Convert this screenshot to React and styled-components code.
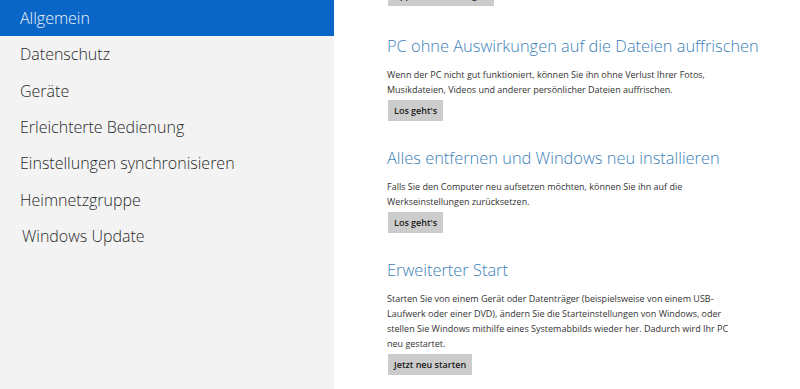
import React from "react";
import styled, { createGlobalStyle } from "styled-components";

const Global = createGlobalStyle`
  html, body { margin: 0; padding: 0; background: #ffffff; overflow: hidden; }
  body { font-family: "Open Sans", "Noto Sans", sans-serif; }
`;

const Page = styled.div`
  display: flex;
  width: 800px;
  height: 389px;
  overflow: hidden;
  background: #ffffff;
`;

const Sidebar = styled.nav`
  width: 334px;
  flex-shrink: 0;
  background: #f3f3f3;
  display: flex;
  flex-direction: column;
`;

const NavItem = styled.div`
  height: 36.3px;
  display: flex;
  align-items: center;
  padding-left: ${(p) => (p.$indent ? 22 : 20)}px;
  font-family: "Open Sans", sans-serif;
  font-weight: 300;
  font-size: 16px;
  color: ${(p) => (p.$active ? "#eef4fb" : "#2a2a2a")};
  background: ${(p) => (p.$active ? "#0a66c6" : "transparent")};
  white-space: nowrap;
`;

const Content = styled.main`
  flex: 1;
  padding-left: 53px;
  display: flex;
  flex-direction: column;
  margin-top: -15px;
`;

const Section = styled.section`
  display: flex;
  flex-direction: column;
  align-items: flex-start;
  padding-top: ${(p) => p.$top || 0}px;
`;

const Heading = styled.h2`
  margin: 0;
  font-family: "Open Sans", sans-serif;
  font-weight: 300;
  font-size: 16.4px;
  line-height: 22px;
  color: #3a7fba;
  white-space: nowrap;
`;

const Body = styled.p`
  margin: 10px 0 3px;
  max-width: 345px;
  font-family: "Open Sans", sans-serif;
  font-size: 9px;
  line-height: 15px;
  color: #333333;
`;

const Button = styled.button`
  border: none;
  margin: 0 0 0 1px;
  height: 21px;
  padding: 0 6px;
  background: #cccccc;
  font-family: "Open Sans", sans-serif;
  font-weight: 600;
  font-size: 9px;
  color: #1a1a1a;
  cursor: pointer;
`;

const navItems = [
  "Allgemein",
  "Datenschutz",
  "Geräte",
  "Erleichterte Bedienung",
  "Einstellungen synchronisieren",
  "Heimnetzgruppe",
  "Windows Update",
];

const sections = [
  {
    title: "PC ohne Auswirkungen auf die Dateien auffrischen",
    text: "Wenn der PC nicht gut funktioniert, können Sie ihn ohne Verlust Ihrer Fotos, Musikdateien, Videos und anderer persönlicher Dateien auffrischen.",
    button: "Los geht's",
  },
  {
    title: "Alles entfernen und Windows neu installieren",
    text: "Falls Sie den Computer neu aufsetzen möchten, können Sie ihn auf die Werkseinstellungen zurücksetzen.",
    button: "Los geht's",
  },
  {
    title: "Erweiterter Start",
    text: "Starten Sie von einem Gerät oder Datenträger (beispielsweise von einem USB-Laufwerk oder einer DVD), ändern Sie die Starteinstellungen von Windows, oder stellen Sie Windows mithilfe eines Systemabbilds wieder her. Dadurch wird Ihr PC neu gestartet.",
    button: "Jetzt neu starten",
  },
];

export default function App() {
  return (
    <Page>
      <Global />
      <Sidebar>
        {navItems.map((n, i) => (
          <NavItem key={n} $active={i === 0} $indent={n === "Windows Update"}>
            {n}
          </NavItem>
        ))}
      </Sidebar>
      <Content>
        <Section>
          <Button>App-Größen anzeigen</Button>
        </Section>
        {sections.map((s, i) => (
          <Section key={s.title} $top={i === 0 ? 29 : 26}>
            <Heading>{s.title}</Heading>
            <Body>{s.text}</Body>
            <Button>{s.button}</Button>
          </Section>
        ))}
      </Content>
    </Page>
  );
}
